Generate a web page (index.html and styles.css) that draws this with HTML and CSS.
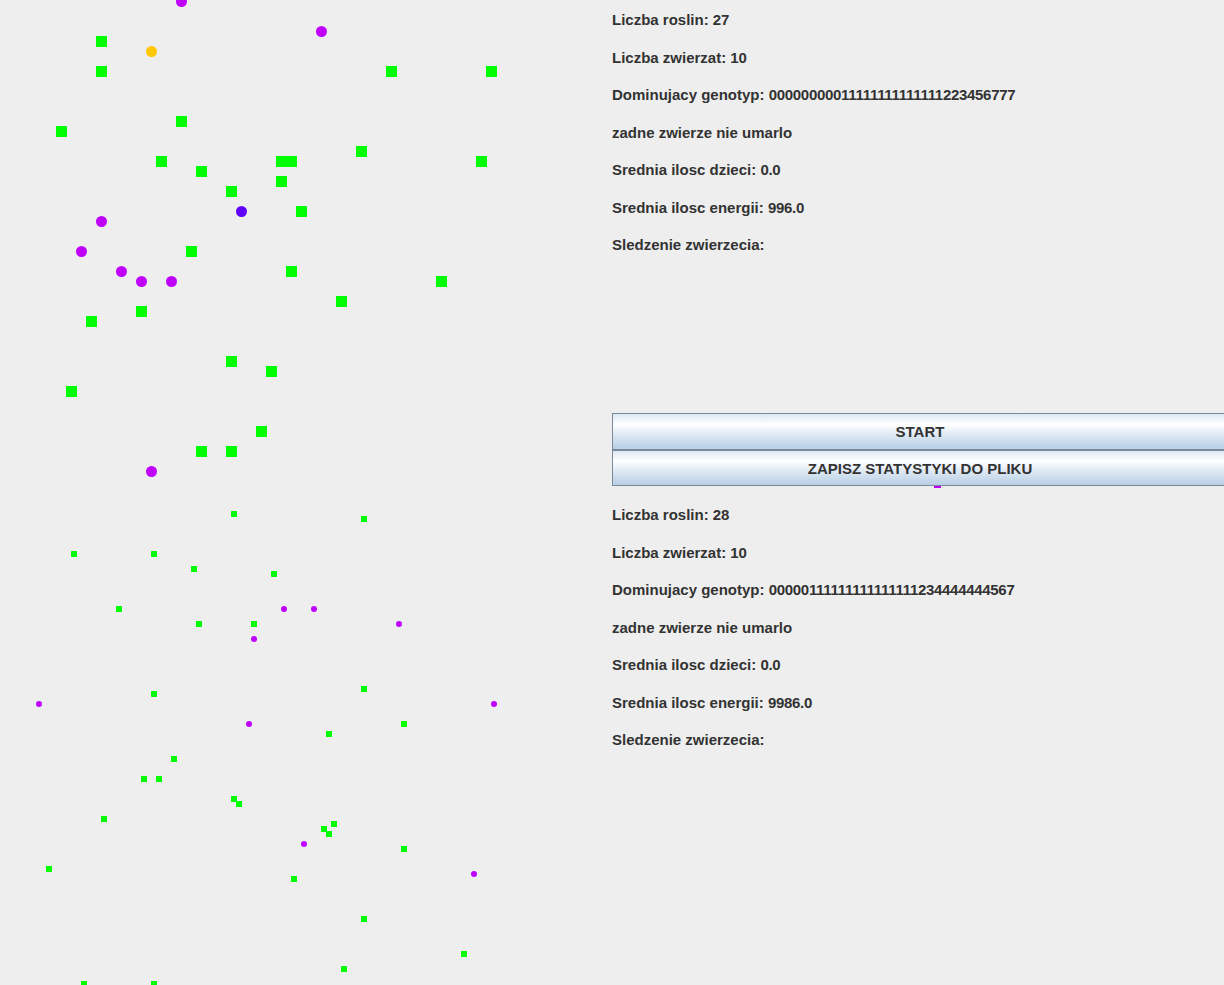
FILE: index.html
```html
<!DOCTYPE html>
<html lang="pl">
<head>
<meta charset="utf-8">
<title>Symulacja</title>
<link rel="stylesheet" href="styles.css">
</head>
<body>
<div class="app">
  <section class="half half-top">
    <div class="map map-big">
      <i class="plant" style="left:96px;top:36px"></i>
      <i class="plant" style="left:96px;top:66px"></i>
      <i class="plant" style="left:386px;top:66px"></i>
      <i class="plant" style="left:486px;top:66px"></i>
      <i class="plant" style="left:56px;top:126px"></i>
      <i class="plant" style="left:176px;top:116px"></i>
      <i class="plant" style="left:156px;top:156px"></i>
      <i class="plant" style="left:196px;top:166px"></i>
      <i class="plant" style="left:276px;top:156px"></i>
      <i class="plant" style="left:286px;top:156px"></i>
      <i class="plant" style="left:356px;top:146px"></i>
      <i class="plant" style="left:476px;top:156px"></i>
      <i class="plant" style="left:226px;top:186px"></i>
      <i class="plant" style="left:276px;top:176px"></i>
      <i class="plant" style="left:296px;top:206px"></i>
      <i class="plant" style="left:186px;top:246px"></i>
      <i class="plant" style="left:286px;top:266px"></i>
      <i class="plant" style="left:436px;top:276px"></i>
      <i class="plant" style="left:336px;top:296px"></i>
      <i class="plant" style="left:136px;top:306px"></i>
      <i class="plant" style="left:86px;top:316px"></i>
      <i class="plant" style="left:226px;top:356px"></i>
      <i class="plant" style="left:266px;top:366px"></i>
      <i class="plant" style="left:66px;top:386px"></i>
      <i class="plant" style="left:256px;top:426px"></i>
      <i class="plant" style="left:196px;top:446px"></i>
      <i class="plant" style="left:226px;top:446px"></i>

      <i class="animal purple" style="left:176px;top:-4px"></i>
      <i class="animal purple" style="left:316px;top:26px"></i>
      <i class="animal orange" style="left:146px;top:46px"></i>
      <i class="animal blue" style="left:236px;top:206px"></i>
      <i class="animal purple" style="left:96px;top:216px"></i>
      <i class="animal purple" style="left:76px;top:246px"></i>
      <i class="animal purple" style="left:116px;top:266px"></i>
      <i class="animal purple" style="left:136px;top:276px"></i>
      <i class="animal purple" style="left:166px;top:276px"></i>
      <i class="animal purple" style="left:146px;top:466px"></i>
    </div>
    <div class="side">
      <div class="stats">
        <div class="row">Liczba roslin: <span class="num">27</span></div>
        <div class="row">Liczba zwierzat: <span class="num">10</span></div>
        <div class="row">Dominujacy genotyp: <span class="num">00000000011111111111111223456777</span></div>
        <div class="row">zadne zwierze nie umarlo</div>
        <div class="row">Srednia ilosc dzieci: <span class="num">0.0</span></div>
        <div class="row">Srednia ilosc energii: <span class="num">996.0</span></div>
        <div class="row">Sledzenie zwierzecia:</div>
      </div>
      <button class="btn btn-start" type="button">START</button>
      <button class="btn btn-save" type="button">ZAPISZ STATYSTYKI DO PLIKU</button>
    </div>
    <i class="stray" style="left:934px;top:486px"></i>
  </section>

  <section class="half half-bottom">
    <div class="map map-small">
      <i class="plant" style="left:231px;top:16px"></i>
      <i class="plant" style="left:71px;top:56px"></i>
      <i class="plant" style="left:151px;top:56px"></i>
      <i class="plant" style="left:191px;top:71px"></i>
      <i class="plant" style="left:271px;top:76px"></i>
      <i class="plant" style="left:116px;top:111px"></i>
      <i class="plant" style="left:196px;top:126px"></i>
      <i class="plant" style="left:251px;top:126px"></i>
      <i class="plant" style="left:151px;top:196px"></i>
      <i class="plant" style="left:361px;top:21px"></i>
      <i class="plant" style="left:361px;top:191px"></i>
      <i class="plant" style="left:401px;top:226px"></i>
      <i class="plant" style="left:326px;top:236px"></i>
      <i class="plant" style="left:171px;top:261px"></i>
      <i class="plant" style="left:141px;top:281px"></i>
      <i class="plant" style="left:156px;top:281px"></i>
      <i class="plant" style="left:231px;top:301px"></i>
      <i class="plant" style="left:236px;top:306px"></i>
      <i class="plant" style="left:101px;top:321px"></i>
      <i class="plant" style="left:46px;top:371px"></i>
      <i class="plant" style="left:81px;top:486px"></i>
      <i class="plant" style="left:151px;top:486px"></i>
      <i class="plant" style="left:331px;top:326px"></i>
      <i class="plant" style="left:321px;top:331px"></i>
      <i class="plant" style="left:326px;top:336px"></i>
      <i class="plant" style="left:401px;top:351px"></i>
      <i class="plant" style="left:291px;top:381px"></i>
      <i class="plant" style="left:361px;top:421px"></i>
      <i class="plant" style="left:461px;top:456px"></i>
      <i class="plant" style="left:341px;top:471px"></i>

      <i class="animal purple" style="left:281px;top:111px"></i>
      <i class="animal purple" style="left:311px;top:111px"></i>
      <i class="animal purple" style="left:396px;top:126px"></i>
      <i class="animal purple" style="left:251px;top:141px"></i>
      <i class="animal purple" style="left:36px;top:206px"></i>
      <i class="animal purple" style="left:246px;top:226px"></i>
      <i class="animal purple" style="left:491px;top:206px"></i>
      <i class="animal purple" style="left:301px;top:346px"></i>
      <i class="animal purple" style="left:471px;top:376px"></i>
    </div>
    <div class="side">
      <div class="stats">
        <div class="row">Liczba roslin: <span class="num">28</span></div>
        <div class="row">Liczba zwierzat: <span class="num">10</span></div>
        <div class="row">Dominujacy genotyp: <span class="num">00000111111111111111234444444567</span></div>
        <div class="row">zadne zwierze nie umarlo</div>
        <div class="row">Srednia ilosc dzieci: <span class="num">0.0</span></div>
        <div class="row">Srednia ilosc energii: <span class="num">9986.0</span></div>
        <div class="row">Sledzenie zwierzecia:</div>
      </div>
    </div>
  </section>
</div>
</body>
</html>
```

FILE: styles.css
```css
html, body {
  margin: 0;
  padding: 0;
  background: #eeeeee;
  overflow: hidden;
}

.app {
  width: 1228px;
  height: 985px;
  display: flex;
  flex-direction: column;
  font-family: "Liberation Sans", Arial, sans-serif;
  font-weight: bold;
  font-size: 15px;
  color: #333333;
}

.half {
  position: relative;
  display: flex;
  flex-direction: row;
}

.half-top {
  height: 495px;
}

.half-bottom {
  height: 490px;
}

.map {
  position: relative;
  width: 612px;
  height: 100%;
  overflow: hidden;
  flex: none;
}

.side {
  width: 616px;
  flex: none;
  display: flex;
  flex-direction: column;
}

.stats {
  height: 413px;
  flex: none;
}

.row {
  box-sizing: border-box;
  height: 37.5px;
  padding-top: 3px;
  line-height: 34.5px;
  white-space: nowrap;
}

.num {
  letter-spacing: -0.3px;
}

.plant,
.animal,
.stray {
  position: absolute;
  display: block;
}

.map-big .plant {
  width: 11px;
  height: 11px;
  background: #00ff00;
}

.map-big .animal {
  width: 11px;
  height: 11px;
  border-radius: 50%;
}

.map-small .plant {
  width: 6px;
  height: 6px;
  background: #00ff00;
}

.map-small .animal {
  width: 6px;
  height: 6px;
  border-radius: 50%;
}

.purple { background: #c000ff; }
.orange { background: #ffc800; }
.blue { background: #6000ff; }

.stray {
  width: 7px;
  height: 2px;
  background: #c000ff;
}

.btn {
  display: flex;
  align-items: center;
  justify-content: center;
  box-sizing: border-box;
  width: 616px;
  margin: 0;
  padding: 0;
  border: 1px solid #7a8a99;
  background: linear-gradient(to bottom, #dde8f3 0%, #ffffff 30%, #dde8f3 60%, #b8cfe5 100%);
  font-family: "Liberation Sans", Arial, sans-serif;
  font-weight: bold;
  font-size: 15px;
  color: #333333;
  flex: none;
}

.btn-start {
  height: 37px;
}

.btn-save {
  height: 36px;
}
```
